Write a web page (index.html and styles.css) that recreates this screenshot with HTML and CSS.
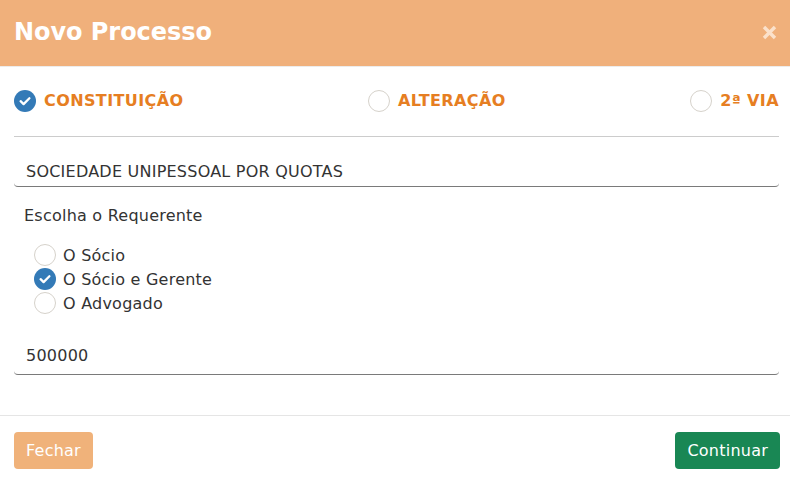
FILE: index.html
```html
<!DOCTYPE html>
<html lang="pt">
<head>
<meta charset="utf-8">
<title>Novo Processo</title>
<link rel="stylesheet" href="styles.css">
</head>
<body>
<div class="modal">
  <div class="modal-header">
    <h1 class="modal-title">Novo Processo</h1>
    <button class="close" aria-label="Fechar">
      <svg width="15" height="15" viewBox="0 0 15 15"><path d="M2 2 L13 13 M13 2 L2 13" stroke="#fbe1cb" stroke-width="3.4" fill="none"/></svg>
    </button>
  </div>
  <div class="modal-body">
    <div class="tabs">
      <label class="tab">
        <span class="radio checked"><svg width="22" height="22" viewBox="0 0 22 22"><circle cx="11" cy="11" r="11" fill="#337ab7"/><path d="M6.6 11.2 L9.6 14.1 L15.4 8.3" stroke="#fff" stroke-width="2.3" fill="none" stroke-linecap="round" stroke-linejoin="round"/></svg></span>
        <span class="tab-label">CONSTITUIÇÃO</span>
      </label>
      <label class="tab">
        <span class="radio"></span>
        <span class="tab-label">ALTERAÇÃO</span>
      </label>
      <label class="tab">
        <span class="radio"></span>
        <span class="tab-label">2ª VIA</span>
      </label>
    </div>
    <div class="field field-first">SOCIEDADE UNIPESSOAL POR QUOTAS</div>
    <div class="caption">Escolha o Requerente</div>
    <div class="options">
      <label class="option"><span class="radio"></span><span>O Sócio</span></label>
      <label class="option"><span class="radio checked"><svg width="22" height="22" viewBox="0 0 22 22"><circle cx="11" cy="11" r="11" fill="#337ab7"/><path d="M6.6 11.2 L9.6 14.1 L15.4 8.3" stroke="#fff" stroke-width="2.3" fill="none" stroke-linecap="round" stroke-linejoin="round"/></svg></span><span>O Sócio e Gerente</span></label>
      <label class="option"><span class="radio"></span><span>O Advogado</span></label>
    </div>
    <div class="field field-second">500000</div>
  </div>
  <div class="modal-footer">
    <button class="btn btn-close">Fechar</button>
    <button class="btn btn-go">Continuar</button>
  </div>
</div>
</body>
</html>
```
FILE: styles.css
```css
* { box-sizing: border-box; }
html, body { margin: 0; padding: 0; background: #fff; }
body {
  font-family: "DejaVu Sans", Verdana, sans-serif;
  font-size: 16px;
  color: #333;
  width: 790px;
  letter-spacing: 0.23px;
}
.modal { width: 790px; }
.modal-header {
  height: 67px;
  background: #f0b07b;
  border-bottom: 1px solid #ececec;
  display: flex;
  align-items: center;
  justify-content: space-between;
  padding: 0 13px 2px 14px;
}
.modal-title {
  margin: 0;
  font-size: 24px;
  font-weight: bold;
  color: #fff;
  letter-spacing: -0.05px;
  line-height: 28px;
}
.close {
  border: 0;
  background: none;
  padding: 0;
  width: 15px;
  height: 15px;
  display: flex;
}
.modal-body {
  padding: 0 11px 40px 14px;
}
.tabs {
  display: flex;
  justify-content: space-between;
  padding: 23px 0 24px;
  border-bottom: 1px solid #cccccc;
}
.tab {
  display: flex;
  align-items: center;
  gap: 8px;
  height: 22px;
}
.tab-label {
  font-weight: bold;
  color: #e67e22;
  line-height: 20px;
  letter-spacing: 0.4px;
}
.radio {
  width: 22px;
  height: 22px;
  border-radius: 50%;
  border: 1px solid #d6d2cb;
  background: #fff;
  flex: none;
  display: block;
}
.radio.checked { border: 0; background: none; }
.radio svg { display: block; }
.field {
  border-bottom: 1px solid #7a7a7a;
  border-radius: 0 0 4px 4px;
  padding-left: 12px;
  line-height: 20px;
}
.field-first { padding-top: 25px; padding-bottom: 4px; }
.caption {
  margin-top: 19px;
  padding-left: 10px;
  line-height: 20px;
}
.options {
  margin-top: 17px;
  padding-left: 20px;
}
.option {
  display: flex;
  align-items: center;
  gap: 7px;
  height: 24px;
}
.field-second { margin-top: 31px; padding-bottom: 8px; }
.modal-footer {
  border-top: 1px solid #e5e5e5;
  display: flex;
  justify-content: space-between;
  padding: 16px 10px 0 14px;
}
.btn {
  font-family: "DejaVu Sans", Verdana, sans-serif;
  font-size: 16px;
  letter-spacing: 0.23px;
  color: #fff;
  border: 0;
  border-radius: 4px;
  height: 37px;
  padding: 0 12px;
  line-height: 20px;
}
.btn-close { background: #f0b27a; }
.btn-go { background: #198754; }
```
